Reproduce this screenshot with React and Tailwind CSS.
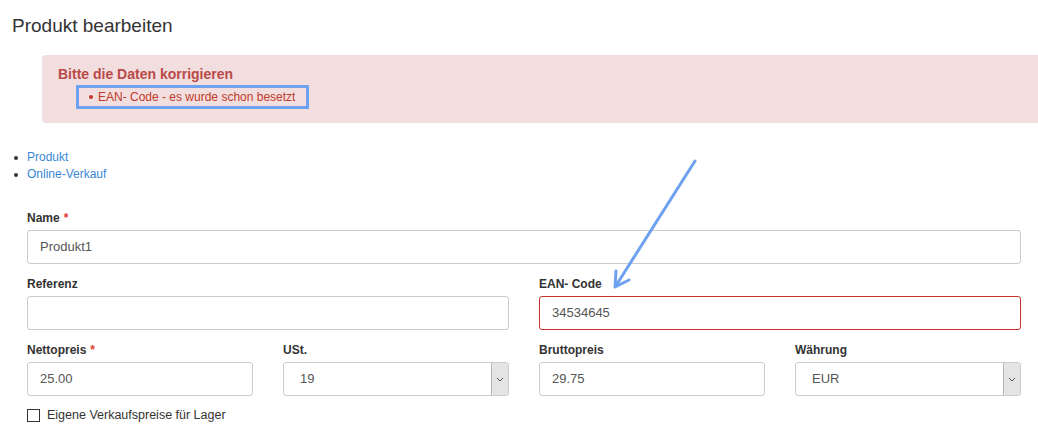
import React from "react";

const Label = ({ children, required }) => (
  <label className="block text-[12px] font-bold text-[#333] mb-[5px] leading-[14px]">
    {children}
    {required && <span className="text-[#e03c31] ml-[4px]">*</span>}
  </label>
);

const Input = ({ value, error }) => (
  <div
    className={`h-[34px] w-full rounded-[3px] border bg-white px-[12px] flex items-center text-[13px] text-[#555] ${
      error ? "border-[#c9302c]" : "border-[#ccc]"
    }`}
  >
    {value}
  </div>
);

const Select = ({ value }) => (
  <div className="h-[34px] w-full rounded-[3px] border border-[#ccc] bg-white flex items-stretch overflow-hidden">
    <div className="flex-1 flex items-center pl-[16px] text-[13px] text-[#555]">{value}</div>
    <div className="w-[17px] bg-[#e4e4e4] border-l border-[#b8b8b8] flex items-center justify-center">
      <svg width="8" height="5" viewBox="0 0 8 5">
        <path d="M1 1 L4 4 L7 1" fill="none" stroke="#555" strokeWidth="1" />
      </svg>
    </div>
  </div>
);

export default function App() {
  return (
    <div
      className="relative w-[1038px] h-[432px] overflow-hidden bg-white text-[#333]"
      style={{ fontFamily: '"Liberation Sans", Arial, sans-serif' }}
    >
      <h1 className="pl-[12px] pt-[15px] text-[19px] leading-[22px] text-[#333]">Produkt bearbeiten</h1>

      <div className="ml-[42px] mt-[18px] -mr-[10px] h-[68px] rounded-[4px] bg-[#f2dede] pl-[16px] pt-[11px]">
        <div className="text-[14px] font-bold text-[#b94a48] leading-[16px]">Bitte die Daten korrigieren</div>
        <div className="ml-[18px] mt-[2px] inline-flex items-center border-[3px] border-[#6ea1f0] h-[24px] w-[233px] pl-[10px] text-[12px] text-[#c0392b]">
          <span className="w-[4px] h-[4px] rounded-full bg-[#c0392b] mr-[5px]"></span>
          EAN- Code - es wurde schon besetzt
        </div>
      </div>

      <ul className="mt-[26px] pl-[14px] text-[12px] leading-[17px] text-[#3a87d6]">
        <li className="flex items-center">
          <span className="w-[4px] h-[4px] rounded-full bg-[#333] mr-[9px]"></span>Produkt
        </li>
        <li className="flex items-center">
          <span className="w-[4px] h-[4px] rounded-full bg-[#333] mr-[9px]"></span>Online-Verkauf
        </li>
      </ul>

      <div className="pl-[27px] w-[1021px] mt-[28px]">
        <Label required>Name</Label>
        <Input value="Produkt1" />

        <div className="grid grid-cols-2 gap-x-[30px] mt-[13px]">
          <div>
            <Label>Referenz</Label>
            <Input value="" />
          </div>
          <div>
            <Label>EAN- Code</Label>
            <Input value="34534645" error />
          </div>
        </div>

        <div className="grid grid-cols-4 gap-x-[30px] mt-[13px]">
          <div>
            <Label required>Nettopreis</Label>
            <Input value="25.00" />
          </div>
          <div>
            <Label>USt.</Label>
            <Select value="19" />
          </div>
          <div>
            <Label>Bruttopreis</Label>
            <Input value="29.75" />
          </div>
          <div>
            <Label>Währung</Label>
            <Select value="EUR" />
          </div>
        </div>

        <div className="flex items-center mt-[10px] text-[12.5px] text-[#333]">
          <span className="w-[13px] h-[13px] border border-[#333] bg-white mr-[7px]"></span>
          Eigene Verkaufspreise für Lager
        </div>
      </div>

      <svg className="absolute left-0 top-0 pointer-events-none" width="1038" height="432">
        <line x1="695" y1="161" x2="617" y2="284" stroke="#6ea1f0" strokeWidth="3" strokeLinecap="round" />
        <path d="M615 287 L616 271 M615 287 L629 280" fill="none" stroke="#6ea1f0" strokeWidth="3" strokeLinecap="round" />
      </svg>
    </div>
  );
}
